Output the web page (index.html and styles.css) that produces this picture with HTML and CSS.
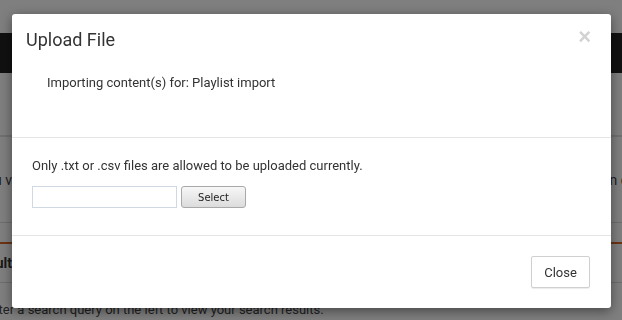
FILE: index.html
```html
<!DOCTYPE html>
<html lang="en">
<head>
    <meta charset="UTF-8">
    <meta name="viewport" content="width=device-width, initial-scale=1.0">
    <title>Upload File</title>
    <link rel="stylesheet" href="styles.css">
</head>
<body>

    <div class="page">
        <div class="topbar"></div>
        <div class="navbar"></div>
        <div class="toolbar"></div>
        <div class="search-row">
            <span class="search-left">You v</span>
            <span class="search-right">Run co</span>
        </div>
        <div class="tabs"></div>
        <div class="results-head">
            <span class="results-title">Results</span>
        </div>
        <div class="results-body">Enter a search query on the left to view your search results.</div>
    </div>

    <div class="backdrop"></div>

    <div class="modal">
        <div class="modal-header">
            <h4 class="modal-title">Upload File</h4>
            <span class="close">&times;</span>
        </div>
        <div class="modal-intro">
            <p>Importing content(s) for: Playlist import</p>
        </div>
        <div class="modal-body">
            <p>Only .txt or .csv files are allowed to be uploaded currently.</p>
            <div class="file-row">
                <input type="text" class="file-name">
                <button class="select-btn">Select</button>
            </div>
        </div>
        <div class="modal-footer">
            <button class="btn-close">Close</button>
        </div>
    </div>

</body>
</html>
```

FILE: styles.css
```css
body {
    margin: 0;
    font-family: 'Roboto', sans-serif;
    background: #fff;
    overflow: hidden;
}

/* Pagina de fondo */
.page {
    width: 622px;
    height: 320px;
}

.topbar {
    height: 33px;
    background: #fff;
}

.navbar {
    height: 40px;
    background: #232323;
}

.toolbar {
    height: 62px;
    border-bottom: 2px solid #e0e0e0;
}

.search-row {
    height: 85px;
    display: flex;
    justify-content: space-between;
    align-items: center;
    font-size: 14px;
    color: #444;
    border-bottom: 1px solid #dcdcdc;
}

.search-left {
    margin-left: -22px;
}

.search-right {
    margin-right: -14px;
}

.tabs {
    height: 19px;
    border-bottom: 2px solid #d9692a;
}

.results-head {
    height: 38px;
    display: flex;
    align-items: center;
    font-size: 14px;
    font-weight: bold;
    color: #333;
    border-bottom: 1px solid #dcdcdc;
}

.results-title {
    margin-left: -28px;
}

.results-body {
    margin-left: -16px;
    padding-top: 19px;
    font-size: 13px;
    color: #444;
    white-space: nowrap;
}

.backdrop {
    position: fixed;
    inset: 0;
    background: rgba(0, 0, 0, 0.5);
}

/* Ventana modal */
.modal {
    position: absolute;
    left: 12px;
    top: 14px;
    width: 599px;
    background: #fff;
    border-radius: 3px;
    box-shadow: 0 3px 12px rgba(0, 0, 0, 0.45);
    color: #333;
}

.modal-header {
    display: flex;
    justify-content: space-between;
    align-items: flex-start;
    padding: 15px 20px 10px 14px;
}

.modal-title {
    margin: 0;
    font-size: 18px;
    font-weight: normal;
    line-height: 22px;
    color: #333;
}

.close {
    font-family: 'Liberation Sans', sans-serif;
    font-size: 22px;
    font-weight: bold;
    line-height: 16px;
    color: #d2d2d2;
    cursor: pointer;
}

.modal-intro {
    padding: 13px 20px 45px 35px;
    border-bottom: 1px solid #e5e5e5;
}

.modal-intro p,
.modal-body p {
    margin: 0;
    font-size: 13px;
    line-height: 18px;
}

.modal-body {
    padding: 19px 20px 27px 20px;
    border-bottom: 1px solid #e5e5e5;
}

.file-row {
    display: flex;
    gap: 4px;
    margin-top: 11px;
}

.file-name {
    width: 145px;
    height: 22px;
    box-sizing: border-box;
    margin: 0;
    border: 1px solid #cfd8e3;
    border-radius: 0;
    padding: 0 3px;
}

.select-btn {
    width: 65px;
    height: 22px;
    margin: 0;
    padding: 0;
    font-family: 'DejaVu Sans', sans-serif;
    font-size: 10px;
    color: #222;
    background: linear-gradient(#f7f7f7, #dcdcdc);
    border: 1px solid #a9a9a9;
    border-radius: 3px;
}

.modal-footer {
    display: flex;
    justify-content: flex-end;
    padding: 20px 21px 20px 20px;
}

.btn-close {
    width: 59px;
    height: 32px;
    padding: 0;
    font-family: 'Roboto', sans-serif;
    font-size: 13px;
    color: #333;
    background: #fff;
    border: 1px solid #d0d0d0;
    border-radius: 2px;
    box-shadow: 0 1px 1px rgba(0, 0, 0, 0.08);
}
```
